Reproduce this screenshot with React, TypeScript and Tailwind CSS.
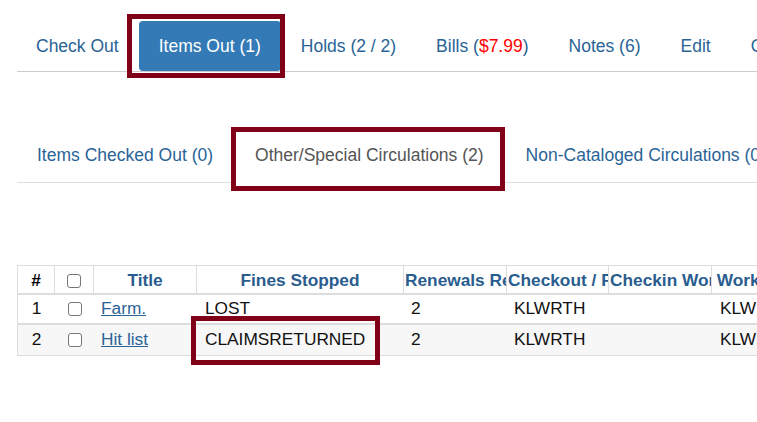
import React from "react"

const navItems = [
  { label: "Check Out" },
  { label: "Items Out (1)", active: true },
  { label: "Holds (2 / 2)" },
  { label: "Bills", bill: "$7.99" },
  { label: "Notes (6)" },
  { label: "Edit" },
  { label: "Other" },
]

const subTabs = [
  { label: "Items Checked Out (0)" },
  { label: "Other/Special Circulations (2)", active: true },
  { label: "Non-Cataloged Circulations (0)" },
]

const columns = [
  { label: "#", w: "w-[37px]" },
  { label: "", w: "w-[39px]", check: true },
  { label: "Title", w: "w-[103px]" },
  { label: "Fines Stopped", w: "w-[207px]" },
  { label: "Renewals Remaining", w: "w-[103px]" },
  { label: "Checkout / Renewal Library", w: "w-[102px]" },
  { label: "Checkin Workstation", w: "w-[103px]" },
  { label: "Workstation", w: "w-[110px]" },
]

const rows = [
  { n: 1, title: "Farm.", fines: "LOST", renewals: "2", lib: "KLWRTH", checkin: "", ws: "KLWRTH" },
  { n: 2, title: "Hit list", fines: "CLAIMSRETURNED", renewals: "2", lib: "KLWRTH", checkin: "", ws: "KLWRTH" },
]

function Box() {
  return <span className="inline-block h-[14px] w-[14px] rounded-[3px] border border-[#767676] bg-white align-middle" />
}

export default function App() {
  return (
    <div className="relative h-[422px] w-[757px] overflow-hidden bg-white font-['Liberation_Sans',Arial,sans-serif]">
      <div className="pl-[17px] pt-[21px]">
        {/* patron tabs */}
        <nav className="flex h-[51px] border-b border-[#ccc] text-[17.5px] whitespace-nowrap">
          {navItems.map((item, i) => (
            <div
              key={item.label}
              className={
                item.active
                  ? "flex h-[50px] shrink-0 items-center rounded-[4px] bg-[#337ab7] px-5 text-white"
                  : `flex h-[50px] shrink-0 items-center px-5 text-[#2a6496] ${i === 0 ? "-ml-px" : ""}`
              }
            >
              {item.bill ? (
                <span>
                  {item.label} (<span className="text-[#ff0000]">{item.bill}</span>)
                </span>
              ) : (
                item.label
              )}
            </div>
          ))}
        </nav>

        {/* items out sub tabs */}
        <div className="mt-[56px] flex h-[55px] border-b border-[#ddd] text-[17.5px] whitespace-nowrap">
          {subTabs.map((tab) => (
            <div
              key={tab.label}
              className={
                tab.active
                  ? "relative -mb-px mr-[2px] flex h-[55px] shrink-0 items-center bg-white px-5 text-[#555]"
                  : "mr-[2px] flex h-[54px] shrink-0 items-center px-5 text-[#2a6496]"
              }
            >
              {tab.label}
            </div>
          ))}
        </div>

        {/* grid */}
        <div className="mt-[82px] w-[800px] border border-[#ddd] text-[17.3px] whitespace-nowrap">
          <div className="flex h-[29px] border-b-2 border-[#ddd] font-bold text-[#2a5d8f]">
            {columns.map((c, i) => (
              <div
                key={i}
                className={`${c.w} shrink-0 overflow-hidden border-r border-[#ddd] px-px text-center leading-[29px] ${
                  i === 0 ? "text-black" : ""
                }`}
              >
                {c.check ? <Box /> : c.label}
              </div>
            ))}
          </div>
          {rows.map((r, i) => (
            <div
              key={r.n}
              className={`flex h-[30px] text-[#111] ${
                i === 0 ? "border-b-2 border-[#ddd]" : "border-b-0 bg-[#f7f7f7]"
              }`}
            >
              <div className="flex w-[37px] shrink-0 items-center justify-center">{r.n}</div>
              <div className="flex w-[39px] shrink-0 items-center justify-center">
                <Box />
              </div>
              <div className="flex w-[103px] shrink-0 items-center px-[7px]">
                <a className="text-[#2a6496] underline">{r.title}</a>
              </div>
              <div className="flex w-[207px] shrink-0 items-center px-[8px]">{r.fines}</div>
              <div className="flex w-[103px] shrink-0 items-center px-[7px]">{r.renewals}</div>
              <div className="flex w-[102px] shrink-0 items-center px-[7px]">{r.lib}</div>
              <div className="flex w-[103px] shrink-0 items-center px-[7px]">{r.checkin}</div>
              <div className="flex w-[110px] shrink-0 items-center px-[8px]">{r.ws}</div>
            </div>
          ))}
        </div>
      </div>

      {/* annotation boxes */}
      <div className="absolute left-[127px] top-[14px] h-[64px] w-[158px] border-[5px] border-[#800018]" />
      <div className="absolute left-[231px] top-[127px] h-[64px] w-[274px] border-[5px] border-[#800018]" />
      <div className="absolute left-[191px] top-[316px] h-[49px] w-[189px] border-[5px] border-[#800018]" />
    </div>
  )
}
